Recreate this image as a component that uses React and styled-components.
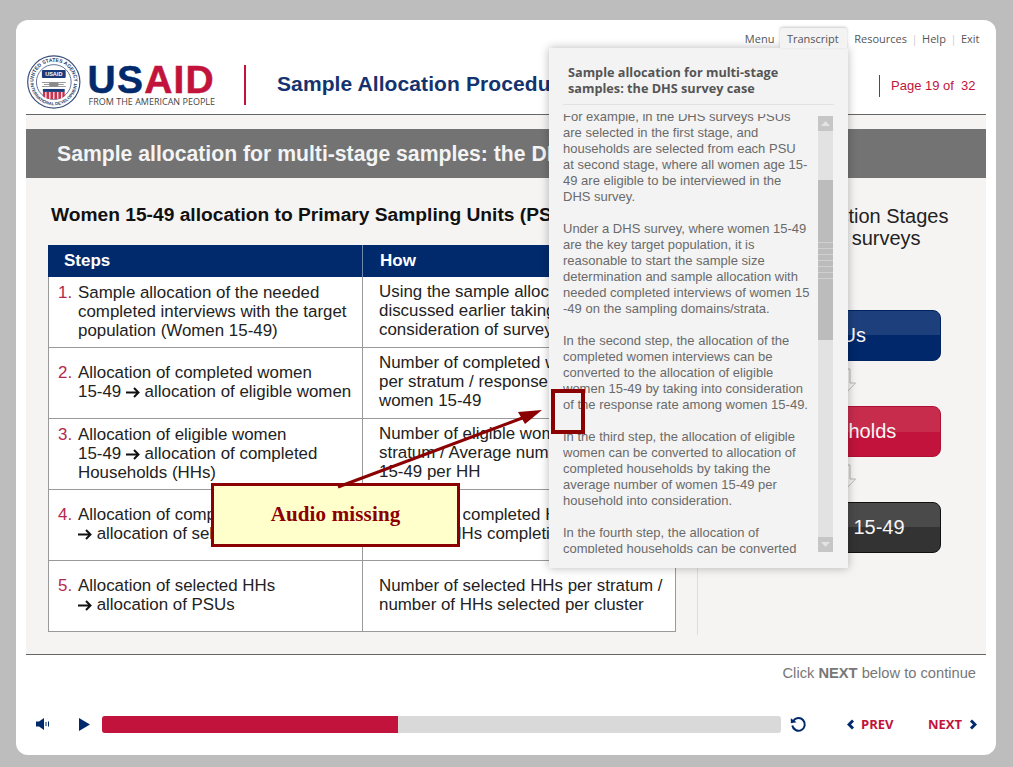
import React from 'react';
import styled, { createGlobalStyle } from 'styled-components';

const navy = '#002a6c';
const crimson = '#c1133b';

const GlobalStyle = createGlobalStyle`
  html, body {
    margin: 0;
    background: #bdbdbd;
    font-family: "Liberation Sans", Arial, sans-serif;
  }
`;

const Page = styled.div`
  position: relative;
  width: 1013px;
  height: 767px;
  padding: 20px 0 0 16px;
  box-sizing: border-box;
  overflow: hidden;
`;

const Card = styled.div`
  position: relative;
  width: 980px;
  height: 735px;
  padding: 8px 10px 0;
  box-sizing: border-box;
  background: #fff;
  border-radius: 12px;
  display: flex;
  flex-direction: column;
`;

const NavBar = styled.nav`
  height: 20px;
  padding-right: 6.5px;
  display: flex;
  justify-content: flex-end;
  align-items: center;
  gap: 4.5px;
  font-family: "Open Sans", sans-serif;
  font-size: 11px;
  color: #555;
`;

const NavTab = styled.span`
  position: relative;
  z-index: 3;
  height: 20px;
  margin: 0 3px 0 1px;
  padding: 0 8px 0 7px;
  display: flex;
  align-items: center;
  background: #f3f3f3;
  border-radius: 3px 3px 0 0;
  box-shadow: 0 -1px 3px rgba(0, 0, 0, 0.22);
`;

const NavSep = styled.span`
  color: #ccc;
`;

const Header = styled.header`
  height: 67px;
  box-sizing: border-box;
  padding-top: 7px;
  border-bottom: 1px solid #666;
  display: flex;
  align-items: flex-start;
`;

const Logo = styled.div`
  width: 188px;
  padding-left: 1px;
  display: flex;
  align-items: flex-start;
  gap: 7px;
`;

const Wordmark = styled.div`
  margin-top: 9px;
  display: flex;
  flex-direction: column;
  width: 128px;
`;

const WordmarkBig = styled.div`
  font-size: 39px;
  line-height: 31px;
  font-weight: 700;
  letter-spacing: 1.2px;
  color: ${navy};
  -webkit-text-stroke: 0.5px currentColor;
`;

const WordmarkRed = styled.span`
  color: ${crimson};
`;

const WordmarkSmall = styled.div`
  margin-top: 1px;
  padding-left: 1px;
  font-family: "Open Sans", sans-serif;
  font-size: 9px;
  line-height: 12px;
  white-space: nowrap;
  color: #444;
`;

const RedRule = styled.div`
  width: 2px;
  height: 40px;
  margin: 10px 31px 0 29px;
  background: ${crimson};
`;

const CourseTitle = styled.h1`
  flex: 1;
  min-width: 0;
  margin: 17px 0 0;
  font-size: 21px;
  font-weight: 700;
  line-height: 24px;
  letter-spacing: 0.1px;
  color: #14336e;
  white-space: nowrap;
`;

const PageCount = styled.div`
  width: 107px;
  height: 22px;
  box-sizing: border-box;
  margin-top: 20px;
  padding-left: 11px;
  border-left: 1px solid ${crimson};
  line-height: 22px;
  font-size: 13px;
  color: ${crimson};
  white-space: pre;
`;

const Content = styled.main`
  height: 540px;
  box-sizing: border-box;
  padding-top: 14px;
  background: #f5f4f3;
  border-bottom: 1px solid #666;
  display: flex;
  flex-direction: column;
`;

const Banner = styled.h2`
  height: 49px;
  margin: 0;
  padding-left: 31px;
  background: #737373;
  color: #f4f4f4;
  font-size: 21.2px;
  font-weight: 700;
  line-height: 50px;
  white-space: nowrap;
`;

const Columns = styled.div`
  flex: 1;
  display: flex;
`;

const LeftColumn = styled.section`
  width: 672px;
  height: 457px;
  box-sizing: border-box;
  padding: 24px 21px 0 22px;
  border-right: 1px solid #ddd;
`;

const SectionTitle = styled.h3`
  height: 24px;
  margin: 0 0 19px 3px;
  font-size: 19.2px;
  font-weight: 700;
  line-height: 25px;
  color: #111;
  white-space: nowrap;
`;

const Table = styled.div`
  width: 628px;
  border: 1px solid #9a9a9a;
  border-top: 0;
  background: #fff;
  box-sizing: border-box;
`;

const HeadRow = styled.div`
  height: 32px;
  margin: 0 -1px;
  background: ${navy};
  display: grid;
  grid-template-columns: 314px 1fr;
`;

const HeadCell = styled.div`
  padding-left: ${p => p.$indent}px;
  color: #fff;
  font-size: 17px;
  font-weight: 700;
  line-height: 31px;
  border-left: ${p => (p.$divided ? '1px solid #6f86ad' : '0')};
`;

const Row = styled.div`
  height: ${p => (p.$last ? 70 : 71)}px;
  box-sizing: border-box;
  border-bottom: ${p => (p.$last ? '0' : '1px solid #9a9a9a')};
  display: grid;
  grid-template-columns: 314px 1fr;
`;

const StepCell = styled.div`
  padding: 0 0 2px 9px;
  border-right: 1px solid #9a9a9a;
  display: flex;
  align-items: center;
  font-size: 16.9px;
  line-height: 19px;
  color: #222;
  white-space: nowrap;
`;

const StepNumber = styled.span`
  width: 20px;
  align-self: flex-start;
  margin-top: ${p => p.$top}px;
  color: #b5284d;
`;

const HowCell = styled.div`
  padding: 0 0 3px 16px;
  display: flex;
  flex-direction: column;
  justify-content: center;
  font-size: 16.9px;
  line-height: 19px;
  color: #222;
  white-space: nowrap;
  overflow: hidden;
`;

const ArrowMark = styled.svg`
  width: 14px;
  height: 11px;
  vertical-align: -1px;
`;

const RightColumn = styled.aside`
  flex: 1;
  padding: 27px 0 0 27px;
  display: flex;
  flex-direction: column;
`;

const StagesTitle = styled.div`
  height: 70px;
  font-size: 20px;
  line-height: 22px;
  color: #222;
  white-space: nowrap;
`;

const Stages = styled.div`
  width: 195px;
  margin: 35px 0 0 21px;
  display: flex;
  flex-direction: column;
  align-items: center;
`;

const tones = {
  navy: ['#1d3f7c', '#00286b', '#00245f'],
  red: ['#c72c4d', '#c1133b', '#ad1034'],
  dark: ['#4a4a4a', '#333', '#111'],
};

const StageButton = styled.div`
  width: 100%;
  height: 51px;
  box-sizing: border-box;
  padding-right: ${p => p.$nudge || 0}px;
  border: 1px solid ${p => tones[p.$tone][2]};
  border-radius: 8px;
  background: linear-gradient(${p => tones[p.$tone][0]} 50%, ${p => tones[p.$tone][1]} 50%);
  color: #f6f6f6;
  font-size: 20px;
  line-height: 49px;
  text-align: center;
`;

const StageArrow = styled.svg`
  display: block;
  width: 24px;
  height: 45px;
`;

const Footer = styled.footer`
  flex: 1;
  display: flex;
  flex-direction: column;
`;

const Hint = styled.div`
  height: 37px;
  padding-right: 10px;
  text-align: right;
  font-size: 14.7px;
  line-height: 37px;
  color: #777;
`;

const Controls = styled.div`
  height: 18px;
  margin-top: 23px;
  padding-left: 10px;
  display: flex;
  align-items: center;
`;

const IconSlot = styled.div`
  width: ${p => p.$w}px;
  display: flex;
  align-items: center;
`;

const Progress = styled.div`
  width: 679px;
  height: 17px;
  border-radius: 3px;
  background: #d9d9d9;
  overflow: hidden;
`;

const ProgressFill = styled.div`
  height: 100%;
  background: ${crimson};
`;

const NavLinks = styled.div`
  margin-left: 40px;
  width: 130px;
  display: flex;
  justify-content: space-between;
  font-family: "Open Sans", sans-serif;
  font-size: 13px;
  font-weight: 700;
  color: ${crimson};
`;

const PageLink = styled.span`
  display: flex;
  align-items: center;
  gap: ${p => p.$gap}px;
`;

const Panel = styled.div`
  position: absolute;
  z-index: 2;
  left: 533px;
  top: 28px;
  width: 299px;
  height: 520px;
  padding: 0 14px 0 14px;
  box-sizing: border-box;
  background: #f3f3f3;
  box-shadow: 0 0 9px rgba(0, 0, 0, 0.28);
  display: flex;
  flex-direction: column;
`;

const PanelTitle = styled.div`
  height: 57px;
  box-sizing: border-box;
  padding: 17px 0 0 5px;
  border-bottom: 1px solid #e2e2e2;
  font-family: "Open Sans", sans-serif;
  font-size: 12.7px;
  font-weight: 700;
  line-height: 15.5px;
  color: #555;
`;

const PanelBody = styled.div`
  margin-top: 9px;
  height: 439px;
  display: flex;
`;

const TranscriptView = styled.div`
  width: 255px;
  overflow: hidden;
`;

const TranscriptText = styled.div`
  margin-top: -5px;
  font-size: 13px;
  line-height: 16px;
  color: #6a6a6a;
  white-space: nowrap;
`;

const Para = styled.p`
  margin: 0 0 16px;
`;

const ScrollTrack = styled.div`
  position: relative;
  width: 15px;
  height: 436px;
  margin-top: 2px;
  background: #e2e2e2;
  display: flex;
  flex-direction: column;
  justify-content: space-between;
`;

const ScrollEnd = styled.div`
  height: 15px;
  background: #c6c6c6;
  display: flex;
  align-items: center;
  justify-content: center;
`;

const ScrollThumb = styled.div`
  position: absolute;
  left: 0;
  top: 64px;
  width: 15px;
  height: 160px;
  background: #bcbcbc;
  display: flex;
  flex-direction: column;
  justify-content: center;
  gap: 5px;
`;

const Grip = styled.div`
  height: 1px;
  background: #d0d0d0;
`;

const Callout = styled.div`
  position: absolute;
  z-index: 4;
  left: 211px;
  top: 483px;
  width: 249px;
  height: 64px;
  box-sizing: border-box;
  border: 3px solid #8b0000;
  background: #ffffcc;
  color: #8b0000;
  font-family: "Liberation Serif", serif;
  font-size: 21px;
  font-weight: 700;
  line-height: 56px;
  letter-spacing: 0.15px;
  text-align: center;
`;

const Marker = styled.div`
  position: absolute;
  z-index: 4;
  left: 551px;
  top: 389px;
  width: 34px;
  height: 45px;
  box-sizing: border-box;
  border: 4px solid #8b0000;
`;

const ArrowLayer = styled.svg`
  position: absolute;
  z-index: 5;
  left: 0;
  top: 0;
  pointer-events: none;
`;

const Arrow = () => (
  <ArrowMark viewBox="0 0 14 11">
    <path d="M0 5.5h12M8 1l4.5 4.5L8 10" fill="none" stroke="#111" strokeWidth="2" />
  </ArrowMark>
);

const steps = [
  {
    step: ['Sample allocation of the needed', 'completed interviews with the target', 'population (Women 15-49)'],
    how: ['Using the sample allocation methods', 'discussed earlier taking into', 'consideration of survey objectives'],
  },
  {
    step: ['Allocation of completed women', <>15-49 <Arrow /> allocation of eligible women</>],
    how: ['Number of completed women', 'per stratum / response rate among', 'women 15-49'],
  },
  {
    step: ['Allocation of eligible women', <>15-49 <Arrow /> allocation of completed</>, 'Households (HHs)'],
    how: ['Number of eligible women per', 'stratum / Average number of women', '15-49 per HH'],
  },
  {
    step: ['Allocation of completed HHs', <><Arrow /> allocation of selected HHs</>],
    how: ['Number of completed HHs per stratum', '/ rates of HHs completing'],
  },
  {
    step: ['Allocation of selected HHs', <><Arrow /> allocation of PSUs</>],
    how: ['Number of selected HHs per stratum /', 'number of HHs selected per cluster'],
  },
];

const transcript = [
  ['For example, in the DHS surveys PSUs', 'are selected in the first stage, and', 'households are selected from each PSU', 'at second stage, where all women age 15-', '49 are eligible to be interviewed in the', 'DHS survey.'],
  ['Under a DHS survey, where women 15-49', 'are the key target population, it is', 'reasonable to start the sample size', 'determination and sample allocation with', 'needed completed interviews of women 15', '-49 on the sampling domains/strata.'],
  ['In the second step, the allocation of the', 'completed women interviews can be', 'converted to the allocation of eligible', 'women 15-49 by taking into consideration', 'of the response rate among women 15-49.'],
  ['In the third step, the allocation of eligible', 'women can be converted to allocation of', 'completed households by taking the', 'average number of women 15-49 per', 'household into consideration.'],
  ['In the fourth step, the allocation of', 'completed households can be converted'],
];

const lines = items => items.map((line, i) => <div key={i}>{line}</div>);

const Seal = () => (
  <svg width="54" height="54" viewBox="0 0 54 54">
    <defs>
      <path id="sealTop" d="M6.5 27a20.5 20.5 0 0 1 41 0" />
      <path id="sealBottom" d="M3.5 27a23.5 23.5 0 0 0 47 0" />
    </defs>
    <circle cx="27" cy="27" r="26.3" fill="#fff" stroke="#3a4f7c" strokeWidth="1.2" />
    <circle cx="27" cy="27" r="17.5" fill="#fff" stroke="#3a4f7c" strokeWidth="0.8" />
    <text fontFamily="Liberation Sans" fontSize="5.2" fontWeight="700" fill="#2b3f6d">
      <textPath href="#sealTop" startOffset="50%" textAnchor="middle">UNITED STATES AGENCY</textPath>
    </text>
    <text fontFamily="Liberation Sans" fontSize="4.4" fontWeight="700" fill="#2b3f6d">
      <textPath href="#sealBottom" startOffset="50%" textAnchor="middle">INTERNATIONAL DEVELOPMENT</textPath>
    </text>
    <rect x="15" y="15" width="24" height="8" rx="1" fill="#1b3a78" />
    <text x="27" y="21.2" textAnchor="middle" fontFamily="Liberation Sans" fontSize="5.6" fontWeight="700" fill="#fff">USAID</text>
    <path d="M15 27.5h24M17 29.5h20M15 31.5h24" stroke="#9a9a9a" strokeWidth="1.1" />
    <ellipse cx="27" cy="29.5" rx="5" ry="2.4" fill="#8a8a8a" />
    <rect x="16" y="34" width="22" height="3" fill="#1b3a78" />
    <path d="M16 37h22v3.5c0 2-5 3.8-11 3.8s-11-1.8-11-3.8z" fill="#c8324e" />
    <path d="M19 37v6M23 37v7M27 37v7.5M31 37v7M35 37v6" stroke="#fff" strokeWidth="1.2" />
  </svg>
);

const Down = () => (
  <StageArrow viewBox="0 0 24 45">
    <path d="M6 8h12v14h5.5L12 34 .5 22H6z" fill="#f5f4f3" stroke="#b4b4b4" strokeWidth="1" />
  </StageArrow>
);

const Chevron = ({ left }) => (
  <svg width="8" height="11" viewBox="0 0 8 11">
    <path d={left ? 'M6 1.5 2 5.5l4 4' : 'M2 1.5l4 4-4 4'} fill="none" stroke={navy} strokeWidth="3" />
  </svg>
);

export default function App() {
  return (
    <Page>
      <GlobalStyle />
      <Card>
        <NavBar>
          <span>Menu</span>
          <NavTab>Transcript</NavTab>
          <span>Resources</span>
          <NavSep>|</NavSep>
          <span>Help</span>
          <NavSep>|</NavSep>
          <span>Exit</span>
        </NavBar>

        <Header>
          <Logo>
            <Seal />
            <Wordmark>
              <WordmarkBig>US<WordmarkRed>AID</WordmarkRed></WordmarkBig>
              <WordmarkSmall>FROM THE AMERICAN PEOPLE</WordmarkSmall>
            </Wordmark>
          </Logo>
          <RedRule />
          <CourseTitle>Sample Allocation Procedures</CourseTitle>
          <PageCount>Page 19 of  32</PageCount>
        </Header>

        <Content>
          <Banner>Sample allocation for multi-stage samples: the DHS survey case</Banner>
          <Columns>
            <LeftColumn>
              <SectionTitle>Women 15-49 allocation to Primary Sampling Units (PSUs)</SectionTitle>
              <Table>
                <HeadRow>
                  <HeadCell $indent={16}>Steps</HeadCell>
                  <HeadCell $indent={17} $divided>How</HeadCell>
                </HeadRow>
                {steps.map((row, i) => (
                  <Row key={i} $last={i === steps.length - 1}>
                    <StepCell>
                      <StepNumber $top={(68 - row.step.length * 19) / 2}>{i + 1}.</StepNumber>
                      <div>{lines(row.step)}</div>
                    </StepCell>
                    <HowCell>{lines(row.how)}</HowCell>
                  </Row>
                ))}
              </Table>
            </LeftColumn>
            <RightColumn>
              <StagesTitle>
                <div>Sample Selection Stages</div>
                <div>from the DHS surveys</div>
              </StagesTitle>
              <Stages>
                <StageButton $tone="navy" $nudge={6}>PSUs</StageButton>
                <Down />
                <StageButton $tone="red">Households</StageButton>
                <Down />
                <StageButton $tone="dark" $nudge={3}>Women 15-49</StageButton>
              </Stages>
            </RightColumn>
          </Columns>
        </Content>

        <Footer>
          <Hint>Click <b>NEXT</b> below to continue</Hint>
          <Controls>
            <IconSlot $w={43}>
              <svg width="14" height="14" viewBox="0 0 14 14">
                <path d="M0 4.5h3L8 1v12L3 9.5H0z" fill={navy} />
                <path d="M10 5v4M12.5 4.5v5" stroke={navy} strokeWidth="1" />
              </svg>
            </IconSlot>
            <IconSlot $w={23}>
              <svg width="11" height="13" viewBox="0 0 11 13">
                <path d="M0 0l11 6.5L0 13z" fill={navy} />
              </svg>
            </IconSlot>
            <Progress>
              <ProgressFill style={{ width: `${(296 / 679) * 100}%` }} />
            </Progress>
            <IconSlot $w={26}>
              <svg width="17" height="17" viewBox="0 0 17 17" style={{ marginLeft: 9 }}>
                <path d="M3.2 5A6.3 6.3 0 1 1 2.3 9.5" fill="none" stroke={navy} strokeWidth="2" />
                <path d="M0.8 2.2 6.6 6.3 0.8 7.2z" fill={navy} />
              </svg>
            </IconSlot>
            <NavLinks>
              <PageLink $gap={6}><Chevron left />PREV</PageLink>
              <PageLink $gap={7}>NEXT<Chevron /></PageLink>
            </NavLinks>
          </Controls>
        </Footer>

        <Panel>
          <PanelTitle>
            <div>Sample allocation for multi-stage</div>
            <div>samples: the DHS survey case</div>
          </PanelTitle>
          <PanelBody>
            <TranscriptView>
              <TranscriptText>
                {transcript.map((para, i) => <Para key={i}>{lines(para)}</Para>)}
              </TranscriptText>
            </TranscriptView>
            <ScrollTrack>
              <ScrollEnd>
                <svg width="9" height="5" viewBox="0 0 9 5"><path d="M4.5 0 9 5H0z" fill="#e4e4e4" /></svg>
              </ScrollEnd>
              <ScrollThumb>
                {[...Array(7)].map((_, i) => <Grip key={i} />)}
              </ScrollThumb>
              <ScrollEnd>
                <svg width="9" height="5" viewBox="0 0 9 5"><path d="M0 0h9L4.5 5z" fill="#e4e4e4" /></svg>
              </ScrollEnd>
            </ScrollTrack>
          </PanelBody>
        </Panel>
      </Card>

      <Callout>Audio missing</Callout>
      <Marker />
      <ArrowLayer width="1013" height="767" viewBox="0 0 1013 767">
        <line x1="338" y1="487" x2="525" y2="417" stroke="#8b0000" strokeWidth="3" />
        <path d="M542 410 518 412 525 424z" fill="#8b0000" />
      </ArrowLayer>
    </Page>
  );
}
